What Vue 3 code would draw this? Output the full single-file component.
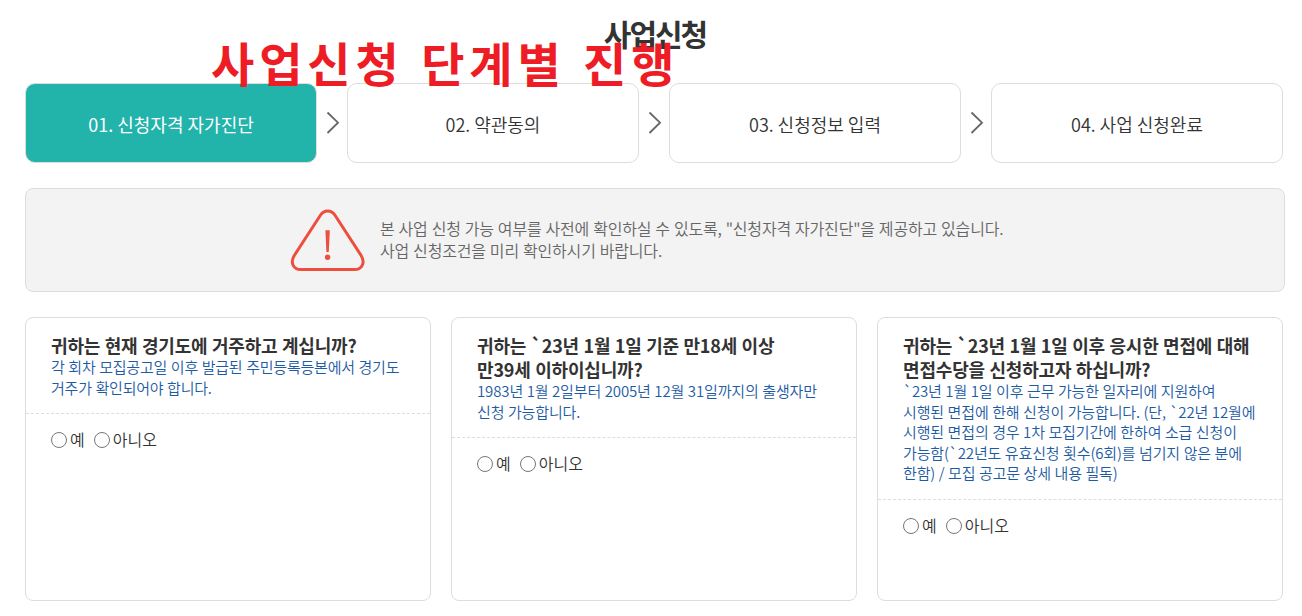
<script setup>
const steps = ['01. 신청자격 자가진단', '02. 약관동의', '03. 신청정보 입력', '04. 사업 신청완료']
const cards = [
  {
    id: 'residence',
    title: ['귀하는 현재 경기도에 거주하고 계십니까?'],
    note: ['각 회차 모집공고일 이후 발급된 주민등록등본에서 경기도', '거주가 확인되어야 합니다.'],
  },
  {
    id: 'age',
    title: ['귀하는 `23년 1월 1일 기준 만18세 이상', '만39세 이하이십니까?'],
    note: ['1983년 1월 2일부터 2005년 12월 31일까지의 출생자만', '신청 가능합니다.'],
  },
  {
    id: 'interview',
    title: ['귀하는 `23년 1월 1일 이후 응시한 면접에 대해', '면접수당을 신청하고자 하십니까?'],
    note: [
      '`23년 1월 1일 이후 근무 가능한 일자리에 지원하여',
      '시행된 면접에 한해 신청이 가능합니다. (단, `22년 12월에',
      '시행된 면접의 경우 1차 모집기간에 한하여 소급 신청이',
      '가능함(`22년도 유효신청 횟수(6회)를 넘기지 않은 분에',
      '한함) / 모집 공고문 상세 내용 필독)',
    ],
  },
]
</script>

<template>
  <main class="page">
    <h1 class="title">사업신청</h1>
    <div class="overlay">사업신청 단계별 진행</div>

    <div class="steps">
      <template v-for="(step, i) in steps" :key="step">
        <svg v-if="i" class="arrow" viewBox="0 0 30 80">
          <path d="M10.5 29.5 L21 39.7 L10.5 50" fill="none" stroke="#666" stroke-width="1.8" />
        </svg>
        <div class="step" :class="{ active: i === 0 }">{{ step }}</div>
      </template>
    </div>

    <section class="notice">
      <svg class="warn" viewBox="0 0 76 64" fill="none">
        <path
          d="M30.4 6.2 L4.4 46.3 C-0.4 54.2 3.8 60.6 10.8 60.6 H64.6 C71.6 60.6 75.8 54.2 71 46.3 L45 6.2 C41.4 0.6 34 0.6 30.4 6.2 Z"
          stroke="#ee4e3e" stroke-width="3"
        />
        <path d="M35.4 21.2 H39.8 L38.8 43 H36.4 Z" fill="#ee4e3e" />
        <circle cx="37.6" cy="48.2" r="2.7" fill="#ee4e3e" />
      </svg>
      <div class="notice-text">
        <p>본 사업 신청 가능 여부를 사전에 확인하실 수 있도록, "신청자격 자가진단"을 제공하고 있습니다.</p>
        <p>사업 신청조건을 미리 확인하시기 바랍니다.</p>
      </div>
    </section>

    <div class="cards">
      <section v-for="card in cards" :key="card.id" class="card" :class="card.id">
        <div class="head">
          <h2><span v-for="line in card.title" :key="line">{{ line }}</span></h2>
          <p class="note"><span v-for="line in card.note" :key="line">{{ line }}</span></p>
        </div>
        <div class="answers">
          <label><input type="radio" :name="card.id" />예</label>
          <label><input type="radio" :name="card.id" />아니오</label>
        </div>
      </section>
    </div>
  </main>
</template>

<style>
body {
  background: #fff;
  overflow: hidden;
}
</style>

<style scoped>
.page {
  position: relative;
  box-sizing: border-box;
  width: 1302px;
  height: 616px;
  padding: 14px 17px 0 25px;
  font-family: 'Noto Sans CJK KR', 'Noto Sans', sans-serif;
  color: #333;
  white-space: nowrap;
}
h1,
h2,
p {
  margin: 0;
}
.title {
  height: 69px;
  font-size: 30px;
  line-height: 38px;
  font-weight: 700;
  letter-spacing: -2px;
  text-align: center;
}
.overlay {
  position: absolute;
  left: 211px;
  top: 28px;
  font-size: 47px;
  line-height: 68px;
  font-weight: 700;
  letter-spacing: 4.9px;
  word-spacing: 2px;
  color: #ee1c25;
}
.steps {
  display: flex;
  width: 1258px;
}
.step {
  box-sizing: border-box;
  flex: 1;
  height: 80px;
  border: 1px solid #ddd;
  border-radius: 10px;
  font-size: 18px;
  line-height: 80px;
  font-weight: 350;
  text-align: center;
}
.step.active {
  background: #22b3ab;
  color: #fff;
  font-weight: 400;
}
.arrow {
  width: 30px;
  height: 80px;
}
.notice {
  display: flex;
  align-items: center;
  box-sizing: border-box;
  height: 104px;
  margin-top: 25px;
  padding-left: 264px;
  border: 1px solid #ddd;
  border-radius: 8px;
  background: #f3f3f3;
}
.warn {
  width: 76px;
  height: 64px;
  margin-top: 2px;
}
.notice-text {
  margin: -2px 0 0 14px;
  font-size: 16px;
  line-height: 22px;
  font-weight: 350;
  letter-spacing: -0.17px;
  word-spacing: 0.6px;
  color: #666;
}
.cards {
  display: flex;
  gap: 20px;
  width: 1258px;
  margin-top: 25px;
}
.card {
  box-sizing: border-box;
  flex: 1;
  height: 284px;
  border: 1px solid #ddd;
  border-radius: 8px;
}
.head {
  padding: 15px 25px 15px;
  border-bottom: 1px dashed #ddd;
}
.head span {
  display: block;
}
.head h2 {
  font-size: 18px;
  line-height: 24px;
  font-weight: 700;
  letter-spacing: -0.18px;
  word-spacing: 0.6px;
}
.note {
  font-size: 15px;
  line-height: 20.5px;
  font-weight: 350;
  letter-spacing: -0.14px;
  word-spacing: 0.4px;
  color: #1d5ba3;
}
.residence .note {
  letter-spacing: -0.22px;
  word-spacing: 0.6px;
}
.answers {
  display: flex;
  gap: 9px;
  padding: 13px 25px;
  font-size: 16px;
  line-height: 24px;
  font-weight: 350;
}
.answers label {
  display: flex;
  align-items: center;
}
.answers input {
  width: 16px;
  height: 16px;
  margin: 1px 3px 0 0;
}
.interview .answers input {
  margin-top: 2px;
}
</style>
